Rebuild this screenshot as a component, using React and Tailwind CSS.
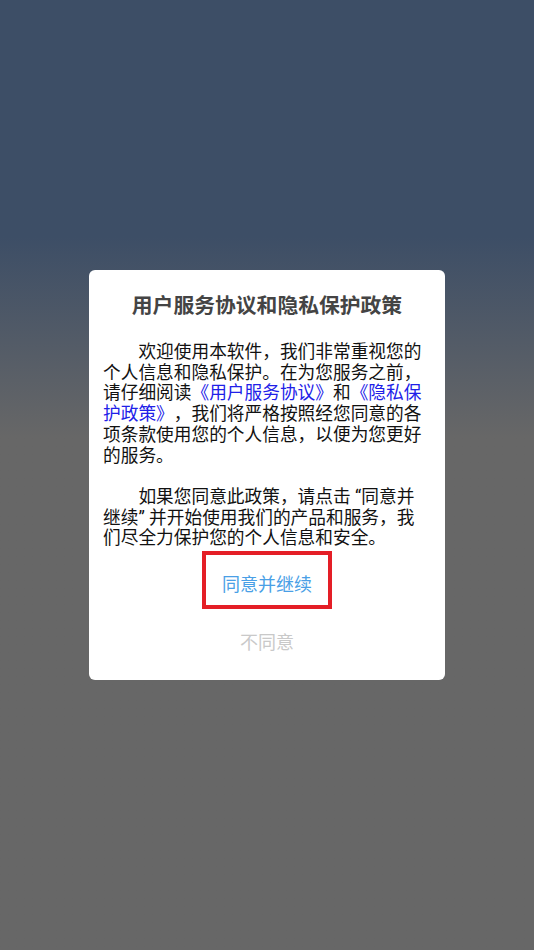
const App = () => {
  return (
    <div
      className="min-h-[950px] w-full bg-linear-to-b from-[#3d4e66] from-25% to-[#676767] to-46% pt-[270px] [text-spacing-trim:space-all]"
      style={{ fontFamily: 'Roboto, "Noto Sans CJK SC", sans-serif' }}
    >
      <div className="mx-auto flex h-[410px] w-[356px] flex-col items-center rounded-[6px] bg-white pt-[22px]">
        <h1 className="text-[20.8px] font-bold leading-[28px] text-[#444]">
          用户服务协议和隐私保护政策
        </h1>

        <div className="mt-[22px] w-[320px] self-start ml-[14px] text-[17.7px] leading-[20.7px] text-[#111]">
          <p className="indent-[2em]">
            欢迎使用本软件，我们非常重视您的个人信息和隐私保护。在为您服务之前，请仔细阅读
            <span className="text-[#2020e8]">《用户服务协议》</span>和
            <span className="text-[#2020e8]">《隐私保护政策》</span>
            ，我们将严格按照经您同意的各项条款使用您的个人信息，以便为您更好的服务。
          </p>
          <p className="mt-[20.7px] indent-[2em]">
            如果您同意此政策，请点击 “同意并继续” 并开始使用我们的产品和服务，我们尽全力保护您的个人信息和安全。
          </p>
        </div>

        <button className="mt-[2px] h-[58px] w-[130px] border-4 border-[#e41e26] pt-[9px] text-[18px] text-[#4a9fe6]">
          同意并继续
        </button>

        <button className="mt-[22px] text-[18px] leading-[24px] text-[#c9c9c9]">
          不同意
        </button>
      </div>
    </div>
  );
};

export default App;
